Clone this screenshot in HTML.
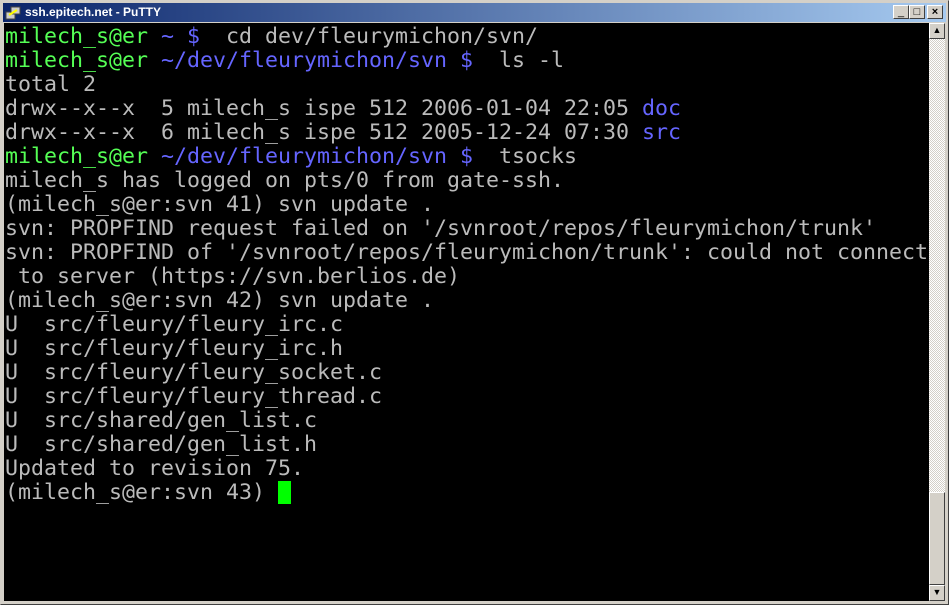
<!DOCTYPE html>
<html><head><style>
body{margin:0;width:949px;height:605px;background:#d4d0c8;position:relative;overflow:hidden;font-family:"Liberation Sans",sans-serif}
.frame{position:absolute;left:0;top:0;width:947px;height:603px;border:1px solid;border-color:#d4d0c8 #404040 #404040 #d4d0c8;}
.title{position:absolute;left:3px;top:3px;width:943px;height:19px;background:linear-gradient(90deg,#0a246a,#a6caf0);color:#fff;font-weight:bold;font-size:12px;line-height:19px}
.title span{position:absolute;left:22px;top:0}
.btn{position:absolute;top:5px;width:16px;height:14px;background:#d4d0c8;border:1px solid;border-color:#fff #404040 #404040 #fff;box-sizing:border-box;font-size:11px;line-height:12px;text-align:center;color:#000}
.term{position:absolute;left:4px;top:23px;width:925px;height:578px;background:#000;}
pre{margin:0;position:absolute;left:1px;top:2px;font-family:"DejaVu Sans Mono",monospace;font-size:21.6px;line-height:24px;color:#bbb}
.g{color:#55ff55}.b{color:#6565ff}
.sb{position:absolute;left:929px;top:23px;width:16px;height:578px;background:repeating-conic-gradient(#fff 0 25%,#d4d0c8 0 50%) 0 0/2px 2px}
.sbtn{position:absolute;left:0;width:16px;height:16px;background:#d4d0c8;border:1px solid;border-color:#fff #404040 #404040 #fff;box-sizing:border-box}
.cur{position:absolute;left:278px;top:481px;width:13px;height:23px;background:#00ff00}
</style></head><body>
<div class="frame"></div>
<div class="title"><svg width="16" height="16" style="position:absolute;left:2px;top:2px"><rect x="1" y="7" width="9" height="7" fill="#ccc" stroke="#444"/><rect x="6" y="2" width="9" height="7" fill="#ccc" stroke="#444"/><path d="M4 10 L12 5" stroke="#ff0" stroke-width="2"/></svg><span>ssh.epitech.net - PuTTY</span></div>
<div class="btn" style="left:893px">_</div>
<div class="btn" style="left:909px">□</div>
<div class="btn" style="left:927px;font-weight:bold">×</div>
<div class="term"><pre><span class="g">milech_s@er</span> <span class="b">~ $</span>  cd dev/fleurymichon/svn/
<span class="g">milech_s@er</span> <span class="b">~/dev/fleurymichon/svn $</span>  ls -l
total 2
drwx--x--x  5 milech_s ispe 512 2006-01-04 22:05 <span class="b">doc</span>
drwx--x--x  6 milech_s ispe 512 2005-12-24 07:30 <span class="b">src</span>
<span class="g">milech_s@er</span> <span class="b">~/dev/fleurymichon/svn $</span>  tsocks
milech_s has logged on pts/0 from gate-ssh.
(milech_s@er:svn 41) svn update .
svn: PROPFIND request failed on '/svnroot/repos/fleurymichon/trunk'
svn: PROPFIND of '/svnroot/repos/fleurymichon/trunk': could not connect
 to server (https://svn.berlios.de)
(milech_s@er:svn 42) svn update .
U  src/fleury/fleury_irc.c
U  src/fleury/fleury_irc.h
U  src/fleury/fleury_socket.c
U  src/fleury/fleury_thread.c
U  src/shared/gen_list.c
U  src/shared/gen_list.h
Updated to revision 75.
(milech_s@er:svn 43) </pre></div>
<div class="cur"></div>
<div class="sb">
<div class="sbtn" style="top:0;font-size:9px;text-align:center;line-height:13px">▲</div>
<div class="sbtn" style="top:469px;height:93px"></div>
<div class="sbtn" style="top:562px;font-size:9px;text-align:center;line-height:13px">▼</div>
</div>
</body></html>
